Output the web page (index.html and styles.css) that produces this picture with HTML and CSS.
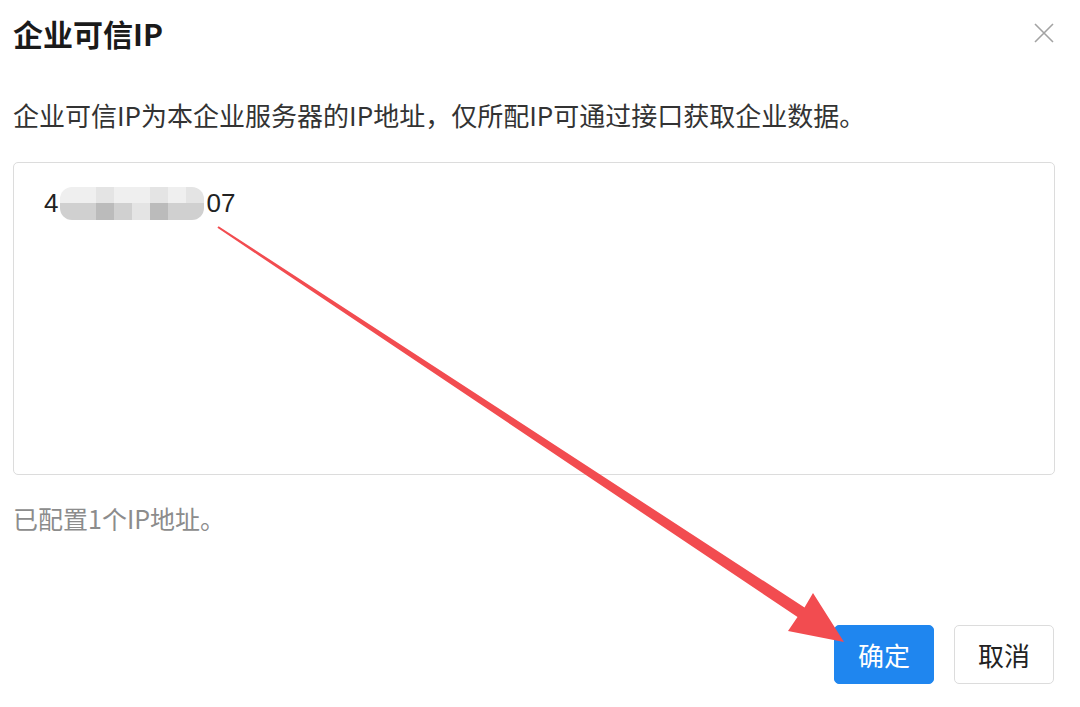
FILE: index.html
```html
<!DOCTYPE html>
<html lang="zh-CN">
<head>
  <meta charset="UTF-8" />
  <title>企业可信IP</title>
  <link rel="stylesheet" href="styles.css">
</head>
<body>
  <div class="dialog">
    <div class="dialog-header">
      <h1>企业可信IP</h1>
      <svg class="close" width="22" height="22" viewBox="0 0 22 22">
        <path d="M2 2 L20 20 M20 2 L2 20" stroke="#a3a3a3" stroke-width="1.6" fill="none"/>
      </svg>
    </div>

    <p class="desc">企业可信IP为本企业服务器的IP地址，仅所配IP可通过接口获取企业数据。</p>

    <div class="ip-box">
      <div class="ip-line">
        <span>4</span>
        <span class="mosaic">
          <span class="m1"></span><span class="m1"></span><span class="m2"></span><span class="m1"></span><span class="m1"></span><span class="m2"></span><span class="m1"></span><span class="m2"></span>
          <span class="m3"></span><span class="m3"></span><span class="m4"></span><span class="m3"></span><span class="m2"></span><span class="m4"></span><span class="m3"></span><span class="m3"></span>
        </span>
        <span>07</span>
      </div>
    </div>

    <p class="hint">已配置1个IP地址。</p>

    <div class="actions">
      <button class="btn btn-primary">确定</button>
      <button class="btn">取消</button>
    </div>
  </div>

  <!-- annotation arrow -->
  <svg class="arrow" width="1080" height="707" viewBox="0 0 1080 707">
    <polygon fill="#f24c50" points="218.6,226.2 217.4,227.8 797.5,617 788,631 844,642 813,593 804.5,607.5"/>
  </svg>
</body>
</html>
```

FILE: styles.css
```css
* {
  margin: 0;
  padding: 0;
  box-sizing: border-box;
}

body {
  background: #fff;
  color: #333;
  font-family: "Noto Sans CJK SC", "Liberation Sans", sans-serif;
  width: 1080px;
  height: 707px;
  overflow: hidden;
  position: relative;
}

.dialog {
  padding: 13px 25px 0 13px;
}

.dialog-header {
  display: flex;
  justify-content: space-between;
  align-items: center;
  height: 40px;
}

.dialog-header h1 {
  font-size: 30px;
  font-weight: bold;
  color: #1a1a1a;
}

.desc {
  margin-top: 47px;
  font-size: 26px;
  line-height: 30px;
  color: #333;
}

.ip-box {
  margin-top: 32px;
  height: 313px;
  border: 1.5px solid #dcdcdc;
  border-radius: 5px;
  padding: 22px 30px;
}

.ip-line {
  display: flex;
  align-items: center;
  font-size: 26px;
  line-height: 36px;
  color: #222;
  font-family: "Liberation Sans", sans-serif;
}

.mosaic {
  display: grid;
  grid-template-columns: repeat(8, 18px);
  grid-template-rows: 16px 17px;
  border-radius: 12px;
  overflow: hidden;
  margin: 0 2px;
}

.m1 { background: #efefef; }
.m2 { background: #e4e4e4; }
.m3 { background: #d0d0d0; }
.m4 { background: #bbbbbb; }

.hint {
  margin-top: 28px;
  font-size: 25px;
  line-height: 30px;
  color: #8c8c8c;
}

.actions {
  display: flex;
  justify-content: flex-end;
  gap: 20px;
  margin-top: 92px;
  padding-right: 1px;
}

.btn {
  width: 100px;
  height: 59px;
  border: 1.5px solid #dcdcdc;
  border-radius: 5px;
  background: #fff;
  color: #222;
  font-size: 26px;
  font-family: "Noto Sans CJK SC", sans-serif;
}

.btn-primary {
  background: #1f86ef;
  border-color: #1f86ef;
  color: #fff;
}

.arrow {
  position: absolute;
  left: 0;
  top: 0;
  pointer-events: none;
}
```
